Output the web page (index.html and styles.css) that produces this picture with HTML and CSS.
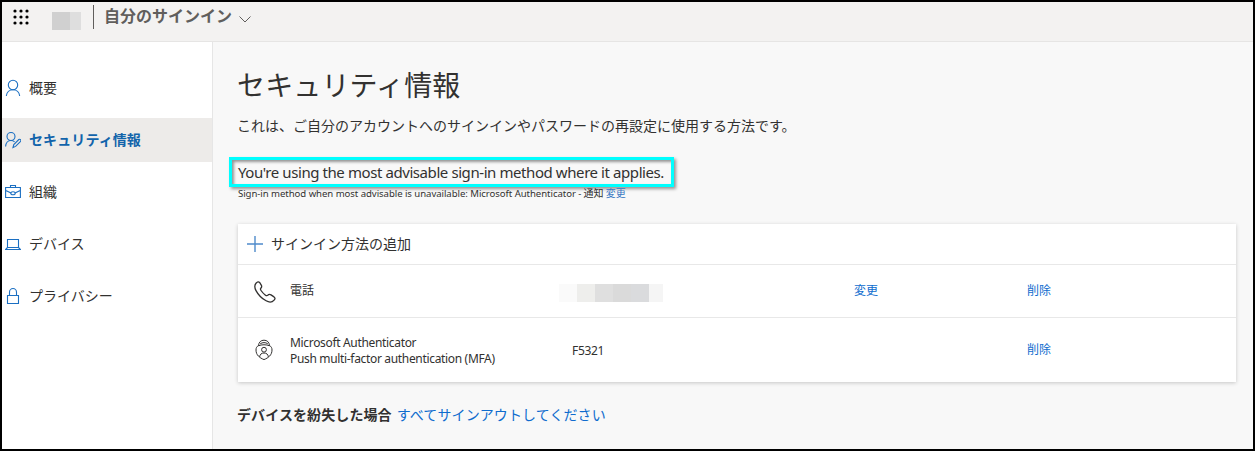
FILE: index.html
```html
<!DOCTYPE html>
<html lang="ja">
<head>
<meta charset="utf-8">
<title>セキュリティ情報</title>
<link rel="stylesheet" href="styles.css">
</head>
<body>
<div class="frame">
  <header class="topbar">
    <svg class="waffle" width="16" height="16" viewBox="0 0 16 16" fill="#000">
      <circle cx="2" cy="2" r="1.6"/><circle cx="8" cy="2" r="1.6"/><circle cx="14" cy="2" r="1.6"/>
      <circle cx="2" cy="8" r="1.6"/><circle cx="8" cy="8" r="1.6"/><circle cx="14" cy="8" r="1.6"/>
      <circle cx="2" cy="14" r="1.6"/><circle cx="8" cy="14" r="1.6"/><circle cx="14" cy="14" r="1.6"/>
    </svg>
    <span class="logo-mask"></span>
    <span class="divider"></span>
    <span class="app-name">自分のサインイン</span>
    <svg class="chevron" width="12" height="7" viewBox="0 0 12 7" fill="none" stroke="#605e5c"><path d="M.5.5 6 6 11.500.5"/></svg>
  </header>
  <div class="body">
    <nav class="sidebar">
      <a class="nav-item"><svg width="16" height="18" viewBox="0 0 16 18" fill="none" stroke="#1b6fc2" stroke-width="1.1"><circle cx="8" cy="6" r="4.700"/><path d="M1.300 17c.4-3.800 3.200-6.300 6.700-6.300s6.300 2.500 6.700 6.300"/></svg><span>概要</span></a>
      <a class="nav-item active"><svg width="16" height="18" viewBox="0 0 16 18" fill="none" stroke="#1b6fc2" stroke-width="1.1"><circle cx="6" cy="5.500" r="4"/><path d="M.6 15.500c.3-3.600 2.600-6 5.400-6 1.500 0 2.700.5 3.600 1.400M8 16.500l.8-3 5-5c1.400-.8 2.600.5 1.800 1.900l-5 5Z"/></svg><span>セキュリティ情報</span></a>
      <a class="nav-item"><svg width="16" height="18" viewBox="0 0 16 18" fill="none" stroke="#1b6fc2" stroke-width="1.1"><path d="M.6 4.500h14.800v10H.6ZM5.500 4.500v-2h5v2M.8 7.500 6 10m4 0 5.200-2.500"/><ellipse cx="8" cy="10.200" rx="2.200" ry="1.500"/></svg><span>組織</span></a>
      <a class="nav-item"><svg width="16" height="18" viewBox="0 0 16 18" fill="none" stroke="#1b6fc2" stroke-width="1.1"><path d="M2.500 4.500h11v8h-11ZM2.500 12.500.6 14.500h14.800L13.500 12.500"/></svg><span>デバイス</span></a>
      <a class="nav-item"><svg width="16" height="18" viewBox="0 0 16 18" fill="none" stroke="#1b6fc2" stroke-width="1.1"><path d="M2.500 8.500h11v8h-11ZM4.500 8.500V5.200a3.500 3.700 0 0 1 7 0v3.300"/></svg><span>プライバシー</span></a>
    </nav>
    <main class="content">
      <h1 class="title">セキュリティ情報</h1>
      <p class="lead">これは、ご自分のアカウントへのサインインやパスワードの再設定に使用する方法です。</p>
      <div class="notice"><span class="notice-text">You're using the most advisable sign-in method where it applies.</span></div>
      <p class="fallback"><span class="fallback-text">Sign-in method when most advisable is unavailable: Microsoft Authenticator -</span> 通知 <a class="soft-link">変更</a></p>
      <section class="card">
        <div class="add-row">
          <svg width="16" height="16" viewBox="0 0 16 16" stroke="#4f8bcb" stroke-width="1.4"><path d="M8 0v16M0 8h16"/></svg>
          <span>サインイン方法の追加</span>
        </div>
        <div class="method phone">
          <svg width="22" height="22" viewBox="0 0 22 22" fill="none" stroke="#323130" stroke-width="1.300"><path d="M2.200 2C3.500.7 4.600.4 5.600 1.500L7.400 4.300C8 5.500 7.800 6.200 6.800 7.200 6.100 8 6.300 8.500 7 9.500c1.100 1.600 2.500 3.100 4.200 4.400 1.200.9 1.700 1.100 2.500.4 1.100-1.100 2-1.200 3.300-.4l3 2c1.300 1 1.300 1.900.1 3.200-2 2.300-4.700 2.600-8 .7C7.800 17.500 4.200 13.700 2 9.600.4 6.500.3 4 2.200 2Z"/></svg>
          <span class="name">電話</span>
          <span class="number-mask"></span>
          <a class="link change">変更</a>
          <a class="link remove">削除</a>
        </div>
        <div class="method app">
          <svg width="18" height="22" viewBox="0 0 18 22" fill="none" stroke="#323130" stroke-width="1"><path d="M3.500 6.500C1.700 7.500 1 9 1 11c0 5 3.500 7.800 8 9.600 4.500-1.800 8-4.600 8-9.600 0-2-.7-3.500-2.500-4.500M3.500 6.800C3.700 3.200 5.800 1.200 9 1.200s5.300 2 5.500 5.600M3.500 6.800C6.500 5.400 11.500 5.400 14.500 6.800M5.200 4.800C7.500 3.200 10.500 3.200 12.800 4.800M4.600 18C5 15.200 6.500 14 9 14s4 1.200 4.400 4"/><circle cx="9" cy="10.700" r="2.400"/></svg>
          <span class="name latin"><span>Microsoft Authenticator</span><br><span>Push multi-factor authentication (MFA)</span></span>
          <span class="device latin">F5321</span>
          <a class="link remove">削除</a>
        </div>
      </section>
      <p class="lost"><strong>デバイスを紛失した場合</strong><a class="link sign-out">すべてサインアウトしてください</a></p>
    </main>
  </div>
</div>
</body>
</html>
```
FILE: styles.css
```css
* { box-sizing: border-box; }
body {
  margin: 0;
  font-family: "Noto Sans CJK JP", sans-serif;
  font-size: 14px;
  color: #323130;
}
.frame {
  width: 1255px;
  height: 451px;
  border: 2px solid #000;
  display: flex;
  flex-direction: column;
  background: #f8f8f8;
  overflow: hidden;
}
p, h1 { margin: 0; white-space: nowrap; }
svg { display: block; flex: none; }

.topbar {
  height: 40px;
  flex: none;
  display: flex;
  align-items: flex-start;
  background: #f3f2f1;
  border-bottom: 1px solid #e6e5e4;
}
.waffle { margin: 6.500px 0 0 10.500px; }
.logo-mask {
  width: 29px;
  height: 18px;
  margin: 10px 0 0 23.500px;
  background: linear-gradient(90deg, #d0d0d0 18px, #dedede 18px);
}
.divider { width: 1px; height: 24px; margin: 3px 0 0 12px; background: #605e5c; }
.app-name {
  margin: 1px 0 0 10px;
  font-size: 16px;
  line-height: 24px;
  font-weight: 700;
  color: #605e5c;
}
.chevron { margin: 14px 0 0 7px; }

.body { flex: 1; display: flex; min-height: 0; }
.sidebar {
  width: 211px;
  flex: none;
  padding-top: 24px;
  display: flex;
  flex-direction: column;
  gap: 8px;
  background: #fff;
  border-right: 1px solid #e6e6e6;
}
.nav-item {
  height: 44px;
  padding-left: 3px;
  display: flex;
  align-items: center;
  gap: 8px;
}
.nav-item span { padding-bottom: 2px; }
.active { background: #edebe9; color: #1264ab; font-weight: 700; letter-spacing: .1px; }

.content { padding: 24px 0 0 25px; }
.title { margin-left: -1px; font-size: 28px; line-height: 36px; font-weight: 400; letter-spacing: .150px; }
.lead { margin: 12px 0 0 -1px; line-height: 22px; }
.notice {
  width: 445px;
  height: 30px;
  margin: 21px 0 0 -9px;
  padding-left: 6px;
  border: 3px solid #00ffff;
  box-shadow: 2px 2px 3px #0006, inset 2px 2px 3px #0006;
  line-height: 25px;
}
.notice-text, .fallback-text, .latin { font-family: "Noto Sans", sans-serif; }
.notice-text { font-size: 15px; letter-spacing: -.42px; }
.fallback { height: 16px; font-size: 10px; line-height: 11px; }
.fallback-text { font-size: 9.600px; letter-spacing: -.060px; }
.soft-link { color: #3a78c3; }
.link { color: #0f6cce; }

.card {
  width: 998px;
  height: 158px;
  margin-top: 21px;
  background: #fff;
  box-shadow: 0 1px 4px #00000033;
}
.add-row {
  height: 41px;
  padding-left: 9px;
  display: flex;
  align-items: center;
  gap: 8px;
  border-bottom: 1px solid #e8e8e8;
}
.add-row span { padding-bottom: 2px; }
.method {
  display: grid;
  grid-template-columns: 52px 282px 282px 173px auto;
  font-size: 12px;
  line-height: 16px;
}
.method > svg { grid-column: 1; }
.name { grid-column: 2; }
.change { grid-column: 4; }
.remove { grid-column: 5; }
.phone { height: 53px; border-bottom: 1px solid #e8e8e8; padding-top: 17px; }
.phone > svg { margin: -1px 0 0 15.500px; }
.app { height: 64px; padding-top: 17px; }
.app > svg { margin: 4px 0 0 17px; }
.number-mask {
  width: 104px;
  height: 18px;
  margin: 2px 0 0 -13px;
  background: linear-gradient(90deg, #fafafa 18px, #eeeeec 18px 36px, #dfdfdf 36px 54px, #dadada 54px 72px, #dadbdd 72px 90px, #f5f5f5 90px);
}
.latin { font-size: 12px; letter-spacing: -.33px; }
.app .device { margin-top: 8px; }
.app .remove { margin-top: 6px; }
.lost { margin: 21px 0 0 -1px; line-height: 22px; display: flex; gap: 5px; }
.lost strong { letter-spacing: .1px; }
.sign-out { letter-spacing: .1px; }
```
